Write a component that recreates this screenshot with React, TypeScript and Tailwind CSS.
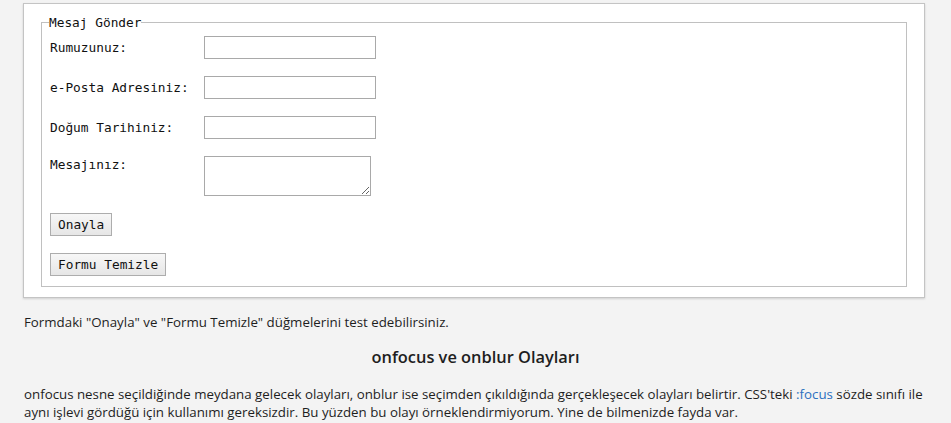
import React from "react";

const mono = "font-['DejaVu_Sans_Mono','Liberation_Mono',monospace]";

export default function App() {
  const rows = [
    { label: "Rumuzunuz:" },
    { label: "e-Posta Adresiniz:" },
    { label: "Doğum Tarihiniz:" },
  ];
  return (
    <div className="min-h-screen w-full bg-[#f3f3f3] pt-[3px] font-['Open_Sans',sans-serif] text-[#1e1e1e]">
      <div className="ml-[23px] w-[902px] border border-[#c4c4c4] bg-white px-[17px] pt-[10px] pb-[10px] shadow-[0_1px_2px_rgba(0,0,0,0.15)]">
        <fieldset className="border border-[#c0c0c0] pl-[8px] pr-[8px] pb-[10px]">
          <legend className={`${mono} ml-[-1px] px-0 text-[12.8px] leading-[16px] text-[#111]`}>
            <span className="relative top-[1px]">Mesaj Gönder</span>
          </legend>
          <div className={`${mono} mt-[6px] flex flex-col gap-[17px] text-[12.8px] text-[#111]`}>
            {rows.map((r) => (
              <div key={r.label} className="flex items-start">
                <label className="w-[154px] leading-[23px]">{r.label}</label>
                <input className="h-[23px] w-[172px] border border-[#a9a9a9] bg-white" />
              </div>
            ))}
            <div className="flex items-start">
              <label className="w-[154px] pt-[1px] leading-[16px]">Mesajınız:</label>
              <textarea className="h-[40px] w-[167px] border border-[#a9a9a9] bg-white" />
            </div>
            <div>
              <button className="h-[23px] border border-[#adadad] bg-gradient-to-b from-[#f7f7f7] to-[#e6e6e6] px-[7px] text-[12.8px] leading-[21px] text-[#111]">Onayla</button>
            </div>
            <div>
              <button className="h-[23px] border border-[#adadad] bg-gradient-to-b from-[#f7f7f7] to-[#e6e6e6] px-[7px] text-[12.8px] leading-[21px] text-[#111]">Formu Temizle</button>
            </div>
          </div>
        </fieldset>
      </div>
      <div className="px-[24px]">
        <p className="mt-[15px] text-[13.3px] leading-[18px]">Formdaki "Onayla" ve "Formu Temizle" düğmelerini test edebilirsiniz.</p>
        <h2 className="mt-[14px] text-center text-[16.4px] font-semibold leading-[24px]">onfocus ve onblur Olayları</h2>
        <p className="mt-[16px] text-[13.3px] leading-[18px]">
          onfocus nesne seçildiğinde meydana gelecek olayları, onblur ise seçimden çıkıldığında gerçekleşecek olayları belirtir. CSS'teki{" "}
          <a className="text-[#2b70c0]">:focus</a> sözde sınıfı ile aynı işlevi gördüğü için kullanımı gereksizdir. Bu yüzden bu olayı örneklendirmiyorum. Yine de bilmenizde fayda var.
        </p>
      </div>
    </div>
  );
}
